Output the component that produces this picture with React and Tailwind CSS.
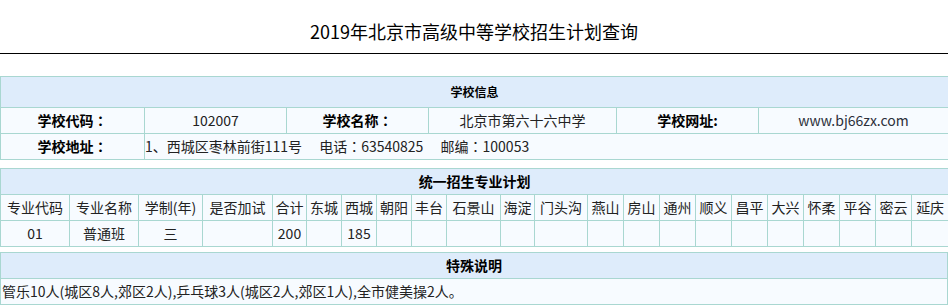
import React from "react";

const font = { fontFamily: '"Microsoft YaHei", "Noto Sans CJK SC", "Noto Sans", sans-serif' };

const districts = [
  ["专业代码", 69, "01"],
  ["专业名称", 69, "普通班"],
  ["学制(年)", 64, "三"],
  ["是否加试", 70, ""],
  ["合计", 34, "200"],
  ["东城", 35, ""],
  ["西城", 35, "185"],
  ["朝阳", 35, ""],
  ["丰台", 35, ""],
  ["石景山", 54, ""],
  ["海淀", 34, ""],
  ["门头沟", 53, ""],
  ["燕山", 36, ""],
  ["房山", 36, ""],
  ["通州", 36, ""],
  ["顺义", 36, ""],
  ["昌平", 36, ""],
  ["大兴", 36, ""],
  ["怀柔", 36, ""],
  ["平谷", 36, ""],
  ["密云", 36, ""],
  ["延庆", 36, ""],
];

const cell = "border border-[#a9d7d1] p-0 whitespace-nowrap";

// fullwidth colon drawn centred, as in the reference
const Colon = () => (
  <span style={{ fontFamily: '"Noto Sans CJK TC", "Noto Sans CJK SC", sans-serif' }}>：</span>
);

export default function App() {
  return (
    <div className="w-[948px] bg-white text-[#222]" style={font}>
      {/* Title */}
      <div className="pt-[18px] pb-[9px] border-b border-black text-center">
        <h1 className="text-[18px] leading-[26px] font-normal text-black">
          2019年北京市高级中等学校招生计划查询
        </h1>
      </div>

      {/* 学校信息 */}
      <table className="mt-[22px] w-[948px] table-fixed border-collapse text-[14px]">
        <colgroup>
          <col className="w-[144px]" />
          <col className="w-[142px]" />
          <col className="w-[142px]" />
          <col className="w-[188px]" />
          <col className="w-[142px]" />
          <col className="w-[190px]" />
        </colgroup>
        <tbody>
          <tr className="bg-[#deecfb]">
            <th colSpan={6} className={`${cell} h-[31px] text-[12px] font-bold text-black text-center`}>
              学校信息
            </th>
          </tr>
          <tr className="bg-[#f7fbff] text-center">
            <td className={`${cell} h-[26px] font-bold text-black`}>学校代码<Colon /></td>
            <td className={cell}>102007</td>
            <td className={`${cell} font-bold text-black`}>学校名称<Colon /></td>
            <td className={cell}>北京市第六十六中学</td>
            <td className={`${cell} font-bold text-black`}>学校网址:</td>
            <td className={`${cell} text-[#2b2f3a]`}>www.bj66zx.com</td>
          </tr>
          <tr className="bg-[#f7fbff]">
            <td className={`${cell} h-[26px] font-bold text-black text-center`}>学校地址<Colon /></td>
            <td colSpan={5} className={`${cell} text-left`}>
              1、西城区枣林前街111号{"\u3000 "}电话<Colon />63540825{"\u3000 "}邮编<Colon />100053
            </td>
          </tr>
        </tbody>
      </table>

      {/* 统一招生专业计划 */}
      <table className="mt-[8px] w-[948px] table-fixed border-collapse text-[14px]">
        <colgroup>
          {districts.map(([name, w], i) => (
            <col key={name} style={{ width: i === districts.length - 1 ? w + 1 : w }} />
          ))}
        </colgroup>
        <tbody>
          <tr className="bg-[#deecfb]">
            <th colSpan={districts.length} className={`${cell} h-[26px] font-bold text-black text-center`}>
              统一招生专业计划
            </th>
          </tr>
          <tr className="bg-[#f7fbff] text-center">
            {districts.map(([name]) => (
              <td key={name} className={`${cell} h-[26px]`}>{name}</td>
            ))}
          </tr>
          <tr className="bg-[#f7fbff] text-center">
            {districts.map(([name, , val]) => (
              <td key={name} className={`${cell} h-[26px]`}>{val}</td>
            ))}
          </tr>
        </tbody>
      </table>

      {/* 特殊说明 */}
      <table className="mt-[5px] w-[948px] border-collapse text-[14px]">
        <tbody>
          <tr className="bg-[#deecfb]">
            <th className={`${cell} h-[26px] font-bold text-black text-center`}>特殊说明</th>
          </tr>
          <tr className="bg-[#f7fbff]">
            <td className={`${cell} h-[26px] pl-[1px] text-left`}>
              管乐10人(城区8人,郊区2人),乒乓球3人(城区2人,郊区1人),全市健美操2人。
            </td>
          </tr>
        </tbody>
      </table>
    </div>
  );
}
